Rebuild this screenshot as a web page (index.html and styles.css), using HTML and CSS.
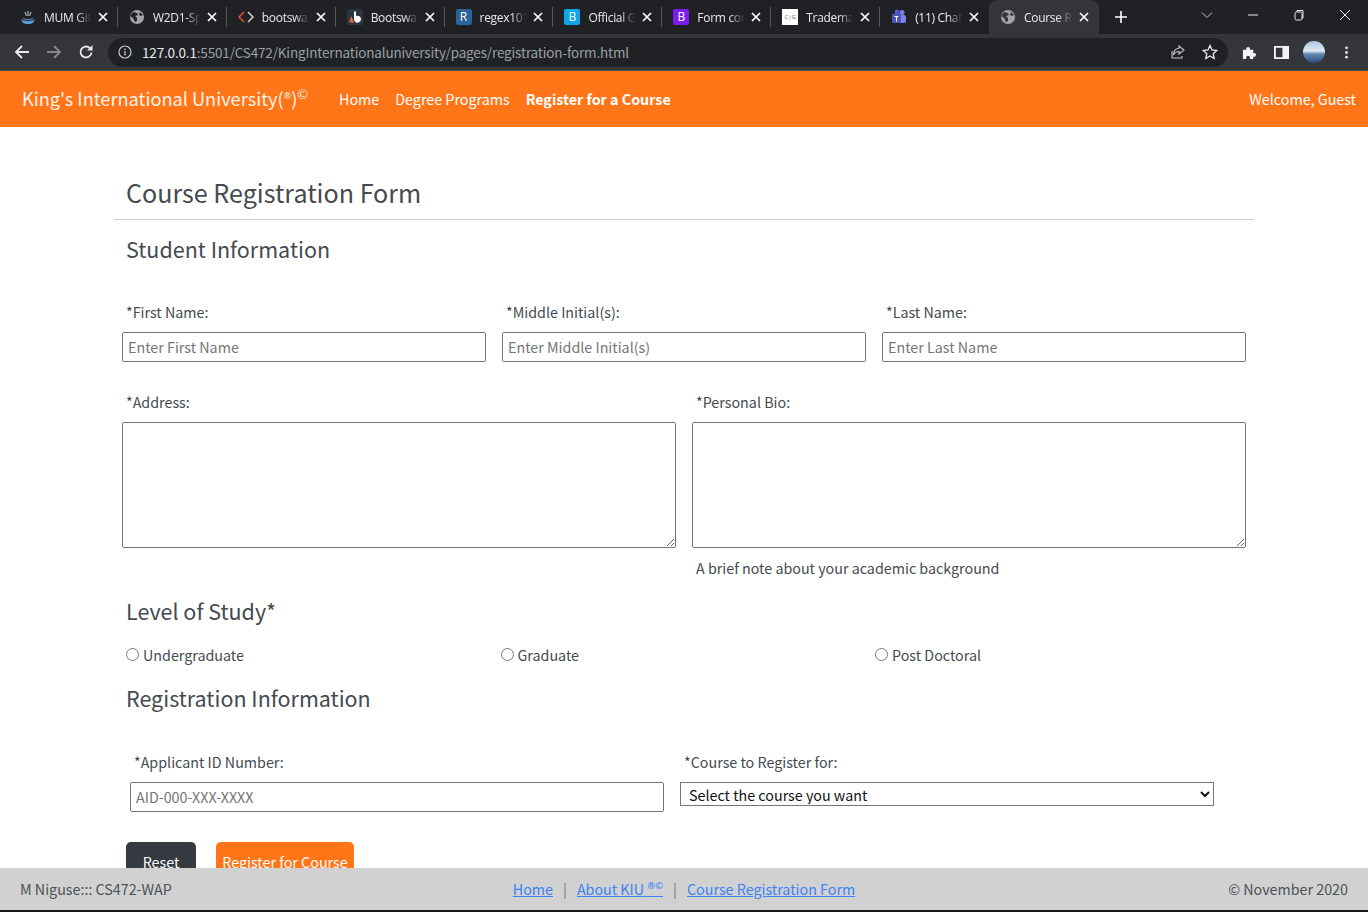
FILE: index.html
```html
<!DOCTYPE html>
<html>
<head>
    <title>Course Registration Form</title>
    <meta charset="utf-8">
    <link rel="stylesheet" href="styles.css">
</head>
<body>
    <!-- BROWSER TABS -->
    <div class="tabstrip">
        <div class="tab">
            <svg class="tab-icon" viewBox="0 0 16 16"><path d="M1 10c1 4 3 5 7 5s6-1 7-5c-1 1-3 2-7 2s-6-1-7-2z" fill="#5b9bd5"/><path d="M3 9.500c1 .7 3 1 5 1s4-.3 5-1" fill="none" stroke="#5b9bd5"/><path d="M8 2v5M5 3l1.500 4M11 3L9.500 7" stroke="#c9d3dc" fill="none"/></svg>
            <span class="tab-title">MUM GitHub</span>
            <svg class="tab-close" viewBox="0 0 10 10"><path d="M1 1l8 8M9 1L1 9"/></svg>
        </div>
        <div class="tab">
            <svg class="tab-icon" viewBox="0 0 16 16"><circle cx="8" cy="8" r="7" fill="#a3a5a8"/><path d="M4 3l4 1 1 2-3 1 2 2 0 3-2 1-2-4-3-2zM11 3l3 3-2 1-2-1z" fill="#202124"/></svg>
            <span class="tab-title">W2D1-Spring</span>
            <svg class="tab-close" viewBox="0 0 10 10"><path d="M1 1l8 8M9 1L1 9"/></svg>
        </div>
        <div class="tab">
            <svg class="tab-icon" viewBox="0 0 16 16"><path d="M6 3L1 8l5 5" fill="none" stroke="#e4572e" stroke-width="1.500"/><path d="M10 3l5 5-5 5" fill="none" stroke="#d0d0d0" stroke-width="1.500"/></svg>
            <span class="tab-title">bootswatch</span>
            <svg class="tab-close" viewBox="0 0 10 10"><path d="M1 1l8 8M9 1L1 9"/></svg>
        </div>
        <div class="tab">
            <svg class="tab-icon" viewBox="0 0 16 16"><rect width="16" height="16" rx="2" fill="#2b3542"/><path d="M7 2.500h2V7a3.500 3.500 0 1 1-2 3z" fill="#fff"/><path d="M2 13l2.500-6 2.500 7z" fill="#e8683f"/></svg>
            <span class="tab-title">Bootswatch</span>
            <svg class="tab-close" viewBox="0 0 10 10"><path d="M1 1l8 8M9 1L1 9"/></svg>
        </div>
        <div class="tab">
            <span class="tab-badge badge-regex">R</span>
            <span class="tab-title">regex101: build</span>
            <svg class="tab-close" viewBox="0 0 10 10"><path d="M1 1l8 8M9 1L1 9"/></svg>
        </div>
        <div class="tab">
            <span class="tab-badge badge-cyan">B</span>
            <span class="tab-title">Official Guide</span>
            <svg class="tab-close" viewBox="0 0 10 10"><path d="M1 1l8 8M9 1L1 9"/></svg>
        </div>
        <div class="tab">
            <span class="tab-badge badge-purple">B</span>
            <span class="tab-title">Form controls</span>
            <svg class="tab-close" viewBox="0 0 10 10"><path d="M1 1l8 8M9 1L1 9"/></svg>
        </div>
        <div class="tab">
            <span class="tab-badge badge-white">C|G</span>
            <span class="tab-title">Trademark</span>
            <svg class="tab-close" viewBox="0 0 10 10"><path d="M1 1l8 8M9 1L1 9"/></svg>
        </div>
        <div class="tab">
            <svg class="tab-icon" viewBox="0 0 16 16"><circle cx="11" cy="3.500" r="2.500" fill="#7b83eb"/><rect x="8" y="6" width="7" height="8" rx="2" fill="#7b83eb"/><circle cx="6" cy="3" r="2.500" fill="#5059c9"/><rect x="1" y="5" width="9" height="9" rx="1" fill="#4b53bc"/><path d="M3.500 7.500h4M5.500 7.500v5" stroke="#fff"/></svg>
            <span class="tab-title">(11) Chat | Teams</span>
            <svg class="tab-close" viewBox="0 0 10 10"><path d="M1 1l8 8M9 1L1 9"/></svg>
        </div>
        <div class="tab tab-active">
            <svg class="tab-icon" viewBox="0 0 16 16"><circle cx="8" cy="8" r="7" fill="#a3a5a8"/><path d="M4 3l4 1 1 2-3 1 2 2 0 3-2 1-2-4-3-2zM11 3l3 3-2 1-2-1z" fill="#35363a"/></svg>
            <span class="tab-title">Course Registration</span>
            <svg class="tab-close" viewBox="0 0 10 10"><path d="M1 1l8 8M9 1L1 9"/></svg>
        </div>
        <svg class="new-tab" viewBox="0 0 12 12"><path d="M6 0v12M0 6h12" stroke="#fff" stroke-width="1.600"/></svg>
        <div class="window-controls">
            <svg class="win-btn" viewBox="0 0 12 12"><path d="M1 3.500l5 5 5-5" fill="none" stroke="#c4c6c9"/></svg>
            <svg class="win-btn" viewBox="0 0 12 12"><path d="M1 6h10" stroke="#e8eaed"/></svg>
            <svg class="win-btn" viewBox="0 0 12 12"><rect x="2" y="3" width="7" height="8" rx="1.500" fill="none" stroke="#e8eaed"/><path d="M4 3V1.500h6V9H9" fill="none" stroke="#e8eaed"/></svg>
            <svg class="win-btn" viewBox="0 0 12 12"><path d="M1 1l10 10M11 1L1 11" stroke="#e8eaed"/></svg>
        </div>
    </div>

    <!-- BROWSER TOOLBAR -->
    <div class="toolbar">
        <svg class="tool-btn" viewBox="0 0 16 16"><path d="M15 8H2M8 2L2 8l6 6" fill="none" stroke="#e8eaed" stroke-width="1.800"/></svg>
        <svg class="tool-btn" viewBox="0 0 16 16"><path d="M1 8h13M8 2l6 6-6 6" fill="none" stroke="#85878a" stroke-width="1.800"/></svg>
        <svg class="tool-btn" viewBox="0 0 16 16"><path d="M13.500 8.500A5.500 5.500 0 1 1 11.800 4" fill="none" stroke="#e8eaed" stroke-width="1.800"/><path d="M14.500 1v5.500H9z" fill="#e8eaed"/></svg>
        <div class="omnibox">
            <svg class="omni-info" viewBox="0 0 14 14"><circle cx="7" cy="7" r="6" fill="none" stroke="#c4c6c9" stroke-width="1.200"/><path d="M7 6v4.500M7 3.500v1.500" stroke="#c4c6c9" stroke-width="1.300"/></svg>
            <span class="url"><b>127.0.0.1</b>:5501/CS472/KingInternationaluniversity/pages/registration-form.html</span>
            <svg class="omni-action" viewBox="0 0 16 16"><path d="M9 2l5 4-5 4V7.500C6 7.500 4.500 9 3.500 11c0-4 2-6.500 5.500-6.800zM2 7v7h10v-2" fill="none" stroke="#c4c6c9" stroke-width="1.100"/></svg>
            <svg class="omni-action" viewBox="0 0 16 16"><path d="M8 1.500l2 4.500 4.800.5-3.600 3.200 1 4.800L8 12l-4.200 2.500 1-4.800L1.200 6.500 6 6z" fill="none" stroke="#e8eaed" stroke-width="1.300"/></svg>
        </div>
        <div class="toolbar-right">
            <svg class="ext-btn" viewBox="0 0 16 16"><path d="M1 5h3.500V4a2 2 0 0 1 4 0v1H12v3.500h1a2 2 0 0 1 0 4h-1V15H8.500v-1.500a2 2 0 0 0-4 0V15H1z" fill="#f1f3f4"/></svg>
            <svg class="ext-btn" viewBox="0 0 16 16"><path d="M1 2h14v12H1z" fill="none" stroke="#f1f3f4" stroke-width="2"/><path d="M9 2h6v12H9z" fill="#f1f3f4"/></svg>
            <span class="avatar"></span>
            <svg class="ext-btn" viewBox="0 0 16 16"><circle cx="8" cy="3" r="1.500" fill="#e8eaed"/><circle cx="8" cy="8" r="1.500" fill="#e8eaed"/><circle cx="8" cy="13" r="1.500" fill="#e8eaed"/></svg>
        </div>
    </div>

    <!-- SITE HEADER -->
    <nav class="site-nav">
        <a class="brand" href="#">King's International University(<sup class="reg">®</sup>)<sup class="copy">©</sup></a>
        <a class="nav-link" href="#">Home</a>
        <a class="nav-link" href="#">Degree Programs</a>
        <a class="nav-link nav-current" href="#">Register for a Course</a>
        <span class="welcome">Welcome, Guest</span>
    </nav>

    <main class="page">
        <div class="container">
            <h1>Course Registration Form</h1>
            <form>
                <h2 class="student-title">Student Information</h2>

                <div class="row-names">
                    <div class="field">
                        <label for="first-name">*First Name:</label>
                        <input id="first-name" type="text" placeholder="Enter First Name">
                    </div>
                    <div class="field">
                        <label for="middle-name">*Middle Initial(s):</label>
                        <input id="middle-name" type="text" placeholder="Enter Middle Initial(s)">
                    </div>
                    <div class="field">
                        <label for="last-name">*Last Name:</label>
                        <input id="last-name" type="text" placeholder="Enter Last Name">
                    </div>
                </div>

                <div class="row-text">
                    <div class="field">
                        <label for="address">*Address:</label>
                        <textarea id="address"></textarea>
                    </div>
                    <div class="field">
                        <label for="bio">*Personal Bio:</label>
                        <textarea id="bio"></textarea>
                        <small class="hint">A brief note about your academic background</small>
                    </div>
                </div>

                <h2 class="level-title">Level of Study*</h2>
                <div class="row-radio">
                    <label><input type="radio" name="level">Undergraduate</label>
                    <label><input type="radio" name="level">Graduate</label>
                    <label><input type="radio" name="level">Post Doctoral</label>
                </div>

                <h2 class="reg-title">Registration Information</h2>
                <div class="row-reg">
                    <div class="field">
                        <label for="applicant">*Applicant ID Number:</label>
                        <input id="applicant" type="text" placeholder="AID-000-XXX-XXXX">
                    </div>
                    <div class="field">
                        <label for="course">*Course to Register for:</label>
                        <select id="course">
                            <option>Select the course you want</option>
                        </select>
                    </div>
                </div>

                <div class="actions">
                    <button class="btn btn-reset" type="reset">Reset</button>
                    <button class="btn btn-submit" type="button">Register for Course</button>
                </div>
            </form>
        </div>
    </main>

    <footer class="site-footer">
        <span>M Niguse::: CS472-WAP</span>
        <div class="footer-links">
            <a href="#">Home</a>
            <span class="sep">|</span>
            <a href="#">About KIU <sup>®©</sup></a>
            <span class="sep">|</span>
            <a href="#">Course Registration Form</a>
        </div>
        <span class="footer-date">© November 2020</span>
    </footer>
    <div class="taskbar-edge"></div>
</body>
</html>
```

FILE: styles.css
```css
html, body {
    margin: 0;
    height: 100%;
}

body {
    display: flex;
    flex-direction: column;
    height: 912px;
    overflow: hidden;
    font-family: "Noto Sans CJK SC", "Noto Sans", sans-serif;
    color: #444a50;
    background: #fff;
}

/* Browser tabs */
.tabstrip {
    display: flex;
    align-items: center;
    height: 34px;
    padding-left: 9px;
    background: #202124;
    font-family: "Open Sans", "Liberation Sans", sans-serif;
    flex-shrink: 0;
}

.tab {
    display: flex;
    align-items: center;
    box-sizing: border-box;
    width: 108.900px;
    height: 34px;
    padding: 0 8px 0 11px;
    background: linear-gradient(#55575b, #55575b) right center / 1px 20px no-repeat;
}

.tab:nth-child(9) {
    background: none;
}

.tab-active {
    width: 110px;
    background: #35363a;
    border-radius: 8px 8px 0 0;
}

.tab-icon {
    width: 16px;
    height: 16px;
    flex-shrink: 0;
}

.tab-badge {
    display: block;
    width: 16px;
    height: 16px;
    flex-shrink: 0;
    border-radius: 2px;
    color: #fff;
    font-size: 12px;
    line-height: 16px;
    text-align: center;
}

.badge-regex { background: #2d6199; }
.badge-cyan { background: #0ea5e9; }
.badge-purple { background: #7a1cf0; }
.badge-white { background: #fff; color: #668; font-size: 6px; border-radius: 0; }

.tab-title {
    flex: 1;
    margin: 0 4px 0 8px;
    overflow: hidden;
    white-space: nowrap;
    color: #e8eaed;
    font-size: 12px;
    letter-spacing: -0.300px;
    -webkit-mask-image: linear-gradient(to right, #000 65%, transparent 95%);
}

.tab-close {
    width: 10px;
    height: 10px;
    margin-right: 2px;
    flex-shrink: 0;
    fill: none;
    stroke: #fff;
    stroke-width: 1.700;
}

.new-tab {
    width: 12px;
    height: 12px;
    margin-left: 16px;
}

.window-controls {
    display: flex;
    gap: 34px;
    margin-left: auto;
    padding-right: 17px;
    align-items: center;
}

.win-btn {
    width: 12px;
    height: 12px;
    margin-top: -5px;
}

/* Browser toolbar */
.toolbar {
    display: flex;
    align-items: center;
    height: 36px;
    padding-left: 14px;
    background: #35363a;
    border-bottom: 1px solid #4a4b4f;
    flex-shrink: 0;
}

.tool-btn {
    width: 16px;
    height: 16px;
    margin-right: 16px;
}

.omnibox {
    display: flex;
    align-items: center;
    box-sizing: border-box;
    width: 1120px;
    height: 29px;
    margin-left: -2px;
    padding: 0 10px;
    border-radius: 15px;
    background: #202124;
}

.omni-info {
    width: 14px;
    height: 14px;
}

.url {
    margin-left: 10px;
    color: #9aa0a6;
    font-size: 13.500px;
    letter-spacing: -0.160px;
    white-space: nowrap;
}

.url b {
    color: #e8eaed;
    font-weight: 400;
}

.omni-action {
    width: 16px;
    height: 16px;
    margin-left: 16px;
}

.omni-action:nth-of-type(2) {
    margin-left: auto;
    margin-right: 0;
}

.toolbar-right {
    display: flex;
    align-items: center;
    gap: 17px;
    margin-left: 14px;
}

.ext-btn {
    width: 15px;
    height: 15px;
}

.avatar {
    width: 22px;
    height: 22px;
    margin: 0 -3px;
    border-radius: 50%;
    background: linear-gradient(#a9c5e4 0%, #dfe9f2 45%, #5e86b0 60%, #2d4f78 100%);
}

/* Site header */
.site-nav {
    display: flex;
    align-items: center;
    box-sizing: border-box;
    height: 56px;
    padding: 0 12px 2px 22px;
    background: #ff7518;
    flex-shrink: 0;
}

.site-nav a {
    color: #fff;
    text-decoration: none;
}

.site-nav .brand {
    width: 283px;
    margin-right: 26px;
    white-space: nowrap;
    font-size: 18.200px;
    color: #fff3ea;
}

.brand sup {
    line-height: 0;
}

/* CJK font draws the registered mark too small, so use Noto Sans for it */
.reg {
    font-family: "Noto Sans", sans-serif;
    font-size: 9px;
}

.copy { font-size: 13px; }

.nav-link {
    margin: 0 8px;
    font-size: 14.300px;
}

.nav-current {
    font-weight: 700;
}

.welcome {
    margin-left: auto;
    color: #fff;
    font-size: 14.300px;
}

/* Form */
.page {
    flex: 1;
    overflow: hidden;
}

.container {
    width: 1140px;
    margin: 0 auto;
}

h1 {
    margin: 47px 0 0;
    padding: 0 12px 9px;
    border-bottom: 1px solid #d0d0d0;
    font-size: 25.100px;
    font-weight: 400;
    line-height: 36px;
}

h2 {
    margin: 0;
    padding: 0 12px;
    font-size: 21.500px;
    font-weight: 400;
    line-height: 30px;
}

.student-title { margin-top: 14px; }
.level-title { margin-top: 15px; }
.reg-title { margin-top: 15px; }

.field {
    display: flex;
    flex-direction: column;
    min-width: 0;
}

.field label {
    padding-left: 4px;
    font-size: 14.300px;
    line-height: 26px;
}

input[type="text"], textarea, select {
    box-sizing: border-box;
    width: 100%;
    margin: 0;
    font-family: inherit;
    font-size: 14.300px;
}

input[type="text"] {
    height: 30px;
    margin-top: 7px;
    padding: 0 4px 2px;
}

input::placeholder {
    color: #757575;
}

textarea {
    display: block;
    height: 126px;
    margin-top: 7px;
}

select {
    height: 24px;
    margin-top: 7px;
    padding: 0 0 1px 4px;
    color: #111;
    background: #fff;
}

.row-names {
    display: grid;
    grid-template-columns: repeat(3, 364px);
    gap: 16px;
    margin: 35px 0 0 8px;
}

.row-text {
    display: grid;
    grid-template-columns: repeat(2, 554px);
    gap: 16px;
    margin: 27px 0 0 8px;
}

.hint {
    margin: 7px 0 0 4px;
    font-size: 14.300px;
    line-height: 26px;
}

.row-radio {
    display: grid;
    grid-template-columns: repeat(3, 374.500px);
    margin: 16px 0 0 12px;
    font-size: 14.300px;
    line-height: 26px;
}

.row-radio input {
    margin: 0 4px 0 0;
    vertical-align: 0;
}

.row-reg {
    display: grid;
    grid-template-columns: repeat(2, 534px);
    gap: 16px;
    margin: 36px 0 0 16px;
}

.actions {
    display: flex;
    gap: 20px;
    margin: 30px 0 0 12px;
}

.btn {
    height: 40px;
    padding: 0 0 2px;
    border: none;
    border-radius: 5px;
    color: #fff;
    font-family: inherit;
    font-size: 14.300px;
    white-space: nowrap;
}

.btn-reset {
    width: 70px;
    background: #343a40;
}

.btn-submit {
    width: 138px;
    background: #ff7518;
}

/* Footer */
.site-footer {
    display: grid;
    grid-template-columns: 1fr auto 1fr;
    align-items: center;
    box-sizing: border-box;
    height: 42px;
    padding: 0 20px 2px;
    background: #d1d1d1;
    font-size: 14.300px;
    color: #4b5157;
    flex-shrink: 0;
}

.footer-date {
    justify-self: end;
}

.footer-links {
    display: flex;
    gap: 10px;
}

.footer-links a {
    color: #3b82f6;
}

.footer-links sup {
    font-family: "Noto Sans", sans-serif;
    font-size: 9.500px;
    line-height: 0;
}

.sep {
    color: #777;
}

.taskbar-edge {
    height: 2px;
    background: #16181c;
    flex-shrink: 0;
}
```
